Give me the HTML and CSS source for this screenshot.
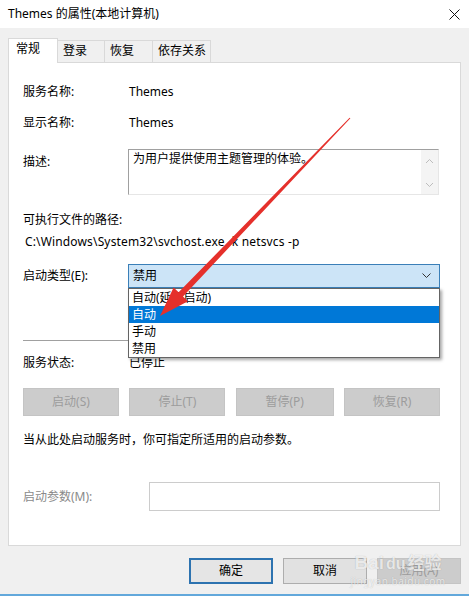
FILE: index.html
```html
<!DOCTYPE html>
<html lang="zh-CN">
<head>
    <meta charset="UTF-8">
    <title>Themes 的属性(本地计算机)</title>
    <link rel="stylesheet" href="styles.css">
</head>
<body>
    <div class="window">
        <div class="titlebar">
            <span>Themes 的属性(本地计算机)</span>
            <svg class="close" width="11" height="11" viewBox="0 0 11 11">
                <path d="M0.5 0.5 L10.5 10.5 M10.5 0.5 L0.5 10.5" stroke="#111" stroke-width="1" fill="none"/>
            </svg>
        </div>

        <div class="dialog">
            <div class="tabs">
                <div class="tab active" style="width:50px">常规</div>
                <div class="tab" style="width:47px">登录</div>
                <div class="tab" style="width:48px">恢复</div>
                <div class="tab" style="width:58px">依存关系</div>
            </div>

            <div class="panel">
                <div class="row">
                    <div class="label">服务名称:</div>
                    <div class="value">Themes</div>
                </div>
                <div class="row row-display">
                    <div class="label">显示名称:</div>
                    <div class="value">Themes</div>
                </div>
                <div class="row row-desc">
                    <div class="label">描述:</div>
                    <div class="desc-box">
                        <div class="desc-text">为用户提供使用主题管理的体验。</div>
                        <div class="scrollbar">
                            <svg width="9" height="6" viewBox="0 0 9 6"><path d="M1 5 L4.5 1.5 L8 5" stroke="#bdbdbd" fill="none"/></svg>
                            <svg width="9" height="6" viewBox="0 0 9 6"><path d="M1 1 L4.5 4.5 L8 1" stroke="#bdbdbd" fill="none"/></svg>
                        </div>
                    </div>
                </div>

                <div class="path-label">可执行文件的路径:</div>
                <div class="path">C:\Windows\System32\svchost.exe -k netsvcs -p</div>

                <div class="row row-startup">
                    <div class="label">启动类型(E):</div>
                    <div class="select-wrap">
                        <div class="select">
                            <span>禁用</span>
                            <svg width="9" height="6" viewBox="0 0 9 6"><path d="M0.5 0.5 L4.5 4.5 L8.5 0.5" stroke="#333" fill="none"/></svg>
                        </div>
                        <ul class="dropdown">
                            <li>自动(延迟启动)</li>
                            <li class="selected">自动</li>
                            <li>手动</li>
                            <li>禁用</li>
                        </ul>
                    </div>
                </div>

                <div class="separator"></div>

                <div class="row row-status">
                    <div class="label">服务状态:</div>
                    <div class="value">已停止</div>
                </div>

                <div class="service-buttons">
                    <button class="btn disabled" style="width:96px">启动(S)</button>
                    <button class="btn disabled" style="width:96px">停止(T)</button>
                    <button class="btn disabled" style="width:98px">暂停(P)</button>
                    <button class="btn disabled" style="width:96px">恢复(R)</button>
                </div>

                <div class="note">当从此处启动服务时，你可指定所适用的启动参数。</div>

                <div class="row row-params">
                    <div class="label label-wide muted">启动参数(M):</div>
                    <div class="params-input"></div>
                </div>
            </div>

            <div class="actions">
                <button class="btn default">确定</button>
                <button class="btn">取消</button>
                <button class="btn disabled">应用(A)</button>
            </div>
        </div>

        <!-- red annotation arrow drawn over the dialog -->
        <svg class="arrow" width="469" height="596" viewBox="0 0 469 596">
            <polygon points="350.4,118.3 183,296.5 188,301.3 160,316 173.6,287.5 178.6,292.3 349.6,117.7" fill="#e5302b"/>
        </svg>

        <div class="watermark">
            <div class="wm-main"><span class="wm-bai">Bai</span><span class="wm-paw">du</span><span class="wm-jy">经验</span></div>
            <div class="wm-url">jingyan.baidu.com</div>
        </div>
    </div>
</body>
</html>
```

FILE: styles.css
```css
body {
    margin: 0;
    background: #f0f0f0;
    font-family: "Noto Sans", "Noto Sans CJK SC", sans-serif;
    font-size: 12px;
    line-height: 20px;
    color: #000;
}

.window {
    position: relative;
    width: 469px;
    height: 596px;
    box-sizing: border-box;
    border-bottom: 2px solid #62a8db;
    overflow: hidden;
}

.titlebar {
    height: 28px;
    background: #fff;
    display: flex;
    align-items: center;
    justify-content: space-between;
    padding: 0 9px 0 8px;
}

.dialog {
    padding: 10px 8px 0;
}

.tabs {
    display: flex;
    align-items: flex-end;
    height: 24px;
}

.tab {
    height: 22px;
    box-sizing: border-box;
    border: 1px solid #d9d9d9;
    border-left: none;
    border-bottom: none;
    padding-left: 5px;
    line-height: 20px;
    background: #f0f0f0;
}

.tab.active {
    height: 25px;
    margin-bottom: -1px;
    border-left: 1px solid #d9d9d9;
    padding-left: 7px;
    background: #fff;
    position: relative;
    z-index: 1;
}

.panel {
    height: 484px;
    box-sizing: border-box;
    border: 1px solid #d9d9d9;
    background: #fff;
    padding: 19px 20px 0 14px;
}

.row {
    display: flex;
    align-items: center;
}

.label {
    width: 105px;
    flex: none;
}

.label-wide {
    width: 126px;
}

.muted {
    color: #8a8a8a;
}

.value {
    padding-left: 1px;
}

.row-display {
    margin-top: 11px;
}

.row-desc {
    margin-top: 16px;
    align-items: flex-start;
}

.row-desc .label {
    padding-top: 3px;
}

.desc-box {
    width: 311px;
    height: 46px;
    box-sizing: border-box;
    border: 1px solid;
    border-color: #a0a0a0 #e6e6e6 #e6e6e6 #a0a0a0;
    display: flex;
}

.desc-text {
    flex: 1;
    padding: 0 4px;
    line-height: 18px;
}

.scrollbar {
    width: 17px;
    background: #f4f4f4;
    display: flex;
    flex-direction: column;
    align-items: center;
    justify-content: space-between;
    padding: 8px 0 6px;
    box-sizing: border-box;
}

.scrollbar svg {
    display: block;
}

.path-label {
    margin-top: 15px;
}

.path {
    margin-top: 2px;
    padding-left: 2px;
    letter-spacing: 0.15px;
}

.row-startup {
    margin-top: 12px;
}

.select-wrap {
    position: relative;
    width: 312px;
}

.select {
    height: 24px;
    box-sizing: border-box;
    background: #cce4f7;
    border: 1px solid #3a7fb8;
    display: flex;
    align-items: center;
    justify-content: space-between;
    padding: 0 8px 0 4px;
}

.dropdown {
    position: absolute;
    top: 24px;
    left: 0;
    width: 312px;
    box-sizing: border-box;
    margin: 0;
    padding: 0;
    list-style: none;
    background: #fff;
    border: 1px solid #646464;
    box-shadow: 2px 2px 3px rgba(0, 0, 0, 0.35);
    z-index: 2;
}

.dropdown li {
    height: 17px;
    line-height: 17px;
    padding-left: 3px;
}

.dropdown li.selected {
    background: #0078d7;
    color: #fff;
}

.separator {
    margin-top: 52px;
    height: 1px;
    background: #a0a0a0;
}

.row-status {
    margin-top: 12px;
}

.service-buttons {
    margin-top: 15px;
    display: flex;
    justify-content: space-between;
}

.btn {
    height: 28px;
    box-sizing: border-box;
    font-family: inherit;
    font-size: 12px;
    line-height: 20px;
    padding: 0;
    color: #000;
    background: #e1e1e1;
    border: 1px solid #adadad;
}

.btn.disabled {
    background: #cccccc;
    border-color: #c4c4c4;
    color: #9c9c9c;
}

.note {
    margin-top: 14px;
}

.row-params {
    margin-top: 32px;
}

.params-input {
    width: 291px;
    height: 29px;
    box-sizing: border-box;
    border: 1px solid #cccccc;
}

.actions {
    margin-top: 12px;
    display: flex;
    justify-content: flex-end;
    gap: 10px;
}

.actions .btn {
    width: 84px;
    height: 26px;
}

.actions .btn.default {
    border: 2px solid #2d73b0;
    background: #e5e5e5;
}

.arrow {
    position: absolute;
    top: 0;
    left: 0;
    z-index: 5;
    pointer-events: none;
}

.watermark {
    position: absolute;
    left: 350px;
    top: 552px;
    width: 96px;
    z-index: 6;
    text-align: center;
    color: rgba(255, 255, 255, 0.75);
    text-shadow: 0 0 1px rgba(0, 0, 0, 0.25);
    pointer-events: none;
}

.wm-main {
    font-family: "Liberation Sans", "Noto Sans CJK SC", sans-serif;
    font-size: 19px;
    font-weight: bold;
    line-height: 22px;
    white-space: nowrap;
}

.wm-paw {
    font-size: 16px;
    margin: 0 2px;
}

.wm-jy {
    font-size: 17px;
}

.wm-url {
    font-size: 10px;
    line-height: 12px;
    letter-spacing: 0.5px;
}
```
